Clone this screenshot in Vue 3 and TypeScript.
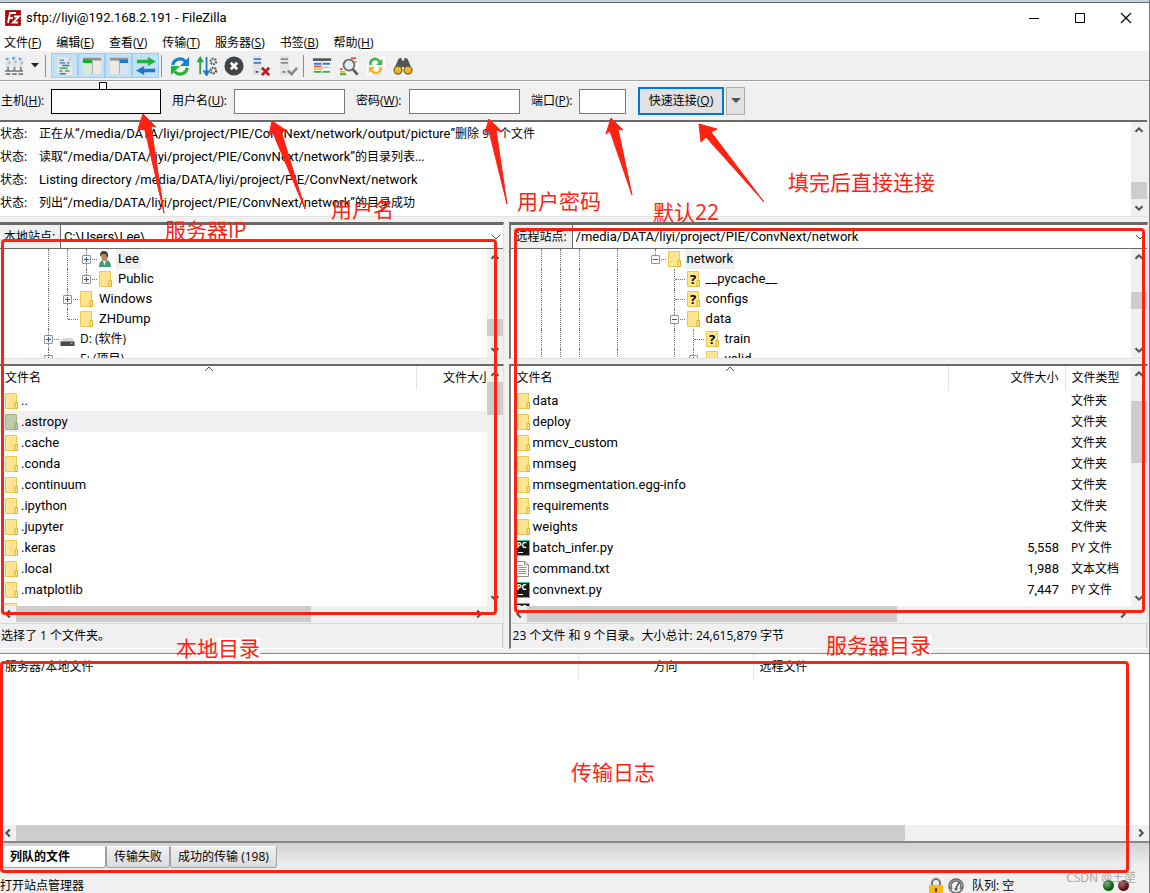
<script setup lang="ts">
interface TreeRow {
  cells: string[]
  icon: string
  label: string
  current?: boolean
  cjk?: boolean
}
interface FileRow {
  icon: string
  name: string
  size?: string
  type?: string
  selected?: boolean
}
interface Pane {
  id: string
  siteLabel: string
  path: string
  tree: TreeRow[]
  files: FileRow[]
  hasType: boolean
  treeThumb: { top: string; height: string }
  listThumb: { top: string; height: string }
  wideThumb: { width: string }
  status: string
}

const menus: [string, string][] = [
  ['文件', 'F'], ['编辑', 'E'], ['查看', 'V'], ['传输', 'T'], ['服务器', 'S'], ['书签', 'B'], ['帮助', 'H'],
]

const logs = [
  { before: '正在从', path: '“/media/DATA/liyi/project/PIE/ConvNext/network/output/picture”', after: '删除 99 个文件' },
  { before: '读取', path: '“/media/DATA/liyi/project/PIE/ConvNext/network”', after: '的目录列表...' },
  { before: '', path: 'Listing directory /media/DATA/liyi/project/PIE/ConvNext/network', after: '' },
  { before: '列出', path: '“/media/DATA/liyi/project/PIE/ConvNext/network”', after: '的目录成功' },
]

const trunk = ['v', 'v', 'v', '', 'v', '']
const folder = (name: string): FileRow => ({ icon: 'folder', name, type: '文件夹' })

const panes: Pane[] = [
  {
    id: 'local',
    siteLabel: '本地站点:',
    path: 'C:\\Users\\Lee\\',
    tree: [
      { cells: ['v', 'v', 'v plus'], icon: 'user', label: 'Lee', current: true },
      { cells: ['v', 'v', 'end plus'], icon: 'folder', label: 'Public' },
      { cells: ['v', 'v plus'], icon: 'folder', label: 'Windows' },
      { cells: ['v', 'end'], icon: 'folder', label: 'ZHDump' },
      { cells: ['v plus'], icon: 'drive', label: 'D: (软件)', cjk: true },
      { cells: ['v plus'], icon: 'drive', label: 'E: (项目)', cjk: true },
    ],
    files: [
      { icon: 'folder', name: '..' },
      { icon: 'folder-sel', name: '.astropy', selected: true },
      ...['.cache', '.conda', '.continuum', '.ipython', '.jupyter', '.keras', '.local', '.matplotlib', '.nuget']
        .map((name) => ({ icon: 'folder', name })),
    ],
    hasType: false,
    treeThumb: { top: '70%', height: '22%' },
    listThumb: { top: '0%', height: '16%' },
    wideThumb: { width: '65%' },
    status: '选择了 1 个文件夹。',
  },
  {
    id: 'remote',
    siteLabel: '远程站点:',
    path: '/media/DATA/liyi/project/PIE/ConvNext/network',
    tree: [
      { cells: [...trunk, 'end minus'], icon: 'folder', label: 'network', current: true },
      { cells: [...trunk, '', 'v tee'], icon: 'unknown', label: '__pycache__' },
      { cells: [...trunk, '', 'v tee'], icon: 'unknown', label: 'configs' },
      { cells: [...trunk, '', 'v minus'], icon: 'folder', label: 'data' },
      { cells: [...trunk, '', 'v', 'v tee'], icon: 'unknown', label: 'train' },
      { cells: [...trunk, '', 'v', 'v plus'], icon: 'folder', label: 'valid' },
    ],
    files: [
      ...['data', 'deploy', 'mmcv_custom', 'mmseg', 'mmsegmentation.egg-info', 'requirements', 'weights'].map(folder),
      { icon: 'py', name: 'batch_infer.py', size: '5,558', type: 'PY 文件' },
      { icon: 'txt', name: 'command.txt', size: '1,988', type: '文本文档' },
      { icon: 'py', name: 'convnext.py', size: '7,447', type: 'PY 文件' },
      { icon: 'py', name: '' },
    ],
    hasType: true,
    treeThumb: { top: '35%', height: '22%' },
    listThumb: { top: '9%', height: '30%' },
    wideThumb: { width: '63%' },
    status: '23 个文件 和 9 个目录。大小总计: 24,615,879 字节',
  },
]

const tools = [
  [
    { id: 'log', label: '消息日志', on: true },
    { id: 'localtree', label: '本地目录树', on: true },
    { id: 'remotetree', label: '远程目录树', on: true },
    { id: 'queue', label: '传输队列', on: true },
  ],
  [
    { id: 'refresh', label: '刷新', on: false },
    { id: 'process', label: '处理队列', on: false },
    { id: 'cancel', label: '取消', on: false },
    { id: 'disconnect', label: '断开', on: false },
    { id: 'reconnect', label: '重新连接', on: false },
  ],
  [
    { id: 'filter', label: '过滤器', on: false },
    { id: 'compare', label: '目录对比', on: false },
    { id: 'sync', label: '同步浏览', on: false },
    { id: 'find', label: '查找', on: false },
  ],
]
</script>

<template>
  <svg class="defs" aria-hidden="true">
    <symbol id="i-folder" viewBox="0 0 16 18">
      <path d="M1.500 1.500h11v15h-11z" fill="#ffe58f" stroke="#ecc84f" />
      <path d="M11 10.500h2.500v6H11z" fill="#ffe58f" stroke="#ddb02f" />
    </symbol>
    <symbol id="i-folder-sel" viewBox="0 0 16 18">
      <path d="M1.500 1.500h11v15h-11z" fill="#bccbaa" stroke="#a6b27a" />
      <path d="M11 10.500h2.500v6H11z" fill="#bccbaa" stroke="#9ba35f" />
    </symbol>
    <symbol id="i-unknown" viewBox="0 0 16 18">
      <path d="M1.500 1.500h11v15h-11z" fill="#ffe58f" stroke="#ecc84f" />
      <path d="M11 10.500h2.500v6H11z" fill="#ffe58f" stroke="#ddb02f" />
      <text x="7" y="14" text-anchor="middle" font-size="13" font-weight="700" font-family="Open Sans, sans-serif" fill="#000">?</text>
    </symbol>
    <symbol id="i-user" viewBox="0 0 16 18">
      <path d="M1 17c0-5 2-7 5-7h2c3 0 5 3 5 7z" fill="#479a76" />
      <path d="M4.500 9.500l2 6 1.500-5z" fill="#fff" />
      <path d="M3.500 4h6v4c0 4-6 4-6 0z" fill="#b98762" />
      <path d="M2 5c0-6 9-5 8 1l-1 2-1-4-4 0-1 3z" fill="#40352f" />
    </symbol>
    <symbol id="i-drive" viewBox="0 0 16 18">
      <path d="M3 8h9l2.500 4h-14z" fill="#d7d9da" />
      <path d="M0.500 11.500h14V16h-14z" fill="#45494b" />
      <path d="M10.500 13.500h2" stroke="#59e95c" stroke-width="1.500" />
    </symbol>
    <symbol id="i-py" viewBox="0 0 16 18">
      <path d="M0 1h14v16H0z" fill="#25d49b" />
      <path d="M0 2h13v14H0z" fill="#171717" />
      <text x="0.500" y="9" font-size="8" font-weight="700" font-family="Open Sans, sans-serif" fill="#fff">PC</text>
      <path d="M2 13.500h5" stroke="#fff" />
    </symbol>
    <symbol id="i-txt" viewBox="0 0 16 18">
      <path d="M.5 1.500h8l4 3v12H.5z" fill="#fff" stroke="#8d8d8d" />
      <path d="M8.500 1.500v3.500h4M2.500 5.500h4m-4 2h8m-8 2h8m-8 2h8m-8 2h8" fill="none" stroke="#929292" />
    </symbol>
    <symbol id="i-chev" viewBox="0 0 16 16">
      <path d="M4.500 9.800L8 6.300l3.500 3.500" fill="none" stroke="#505050" stroke-width="2" />
    </symbol>
  </svg>

  <main class="window">
    <div class="backdrop"></div>
    <header class="title">
      <svg class="logo" viewBox="0 0 16 16">
        <path d="M.5.5h15v15H.5z" fill="#b30808" stroke="#8e0000" stroke-dasharray="2 1" />
        <path d="M3 13L5 3h6M4 8h4M9 6.500h5l-6 6h5" fill="none" stroke="#fff" stroke-width="1.800" />
      </svg>
      <h1 class="lat">sftp://liyi@192.168.2.191 - FileZilla</h1>
      <button class="win" aria-label="最小化"><svg viewBox="0 0 12 12"><path d="M1 6.500h10" stroke="#000" /></svg></button>
      <button class="win" aria-label="最大化"><svg viewBox="0 0 12 12"><path d="M1.500 1.500h9v9h-9z" fill="none" stroke="#000" /></svg></button>
      <button class="win" aria-label="关闭"><svg viewBox="0 0 12 12"><path d="M1 1l10 10M11 1L1 11" stroke="#000" stroke-width="1.200" /></svg></button>
    </header>

    <nav class="menu">
      <button v-for="m in menus" :key="m[1]">{{ m[0] }}(<u>{{ m[1] }}</u>)</button>
    </nav>

    <div class="toolbar">
      <button class="tool" aria-label="站点管理器">
        <svg viewBox="0 0 22 22">
          <path d="M2 1h5v12H2zM9 0h5v12H9zM16 1h5v12h-5z" fill="#d9e1e6" />
          <path d="M2 3.500h3M9 2.500h3M16 3.500h3" stroke="#4f9fe0" stroke-width="2" />
          <path d="M5 7.500h2M12 6.500h2M19 7.500h2" stroke="#8a979f" stroke-width="1.500" />
          <path d="M4.500 12v4M11.500 12v4M18.500 12v4M1 16.500h20M2 20h5M9 20h5M16 20h5" stroke="#767676" stroke-width="1.800" />
        </svg>
      </button>
      <button class="more" aria-label="站点列表"><svg viewBox="0 0 8 5"><path d="M0 0h8L4 4.500z" fill="#222" /></svg></button>
      <template v-for="(group, gi) in tools" :key="gi">
        <span class="sep"></span>
        <button v-for="t in group" :key="t.id" class="tool" :class="{ on: t.on }" :aria-label="t.label">
          <svg v-if="t.id === 'log'" viewBox="0 0 22 22">
            <path d="M3 1h12l4 4v16H3z" fill="#e8e8e4" />
            <path d="M15 1v4h4z" fill="#c3c6c7" />
            <path d="M5 4.500h5m3 3h3m-11 9h3" stroke="#5d7891" stroke-width="1.500" />
            <path d="M5 7.500h6M8 10.500h8M5 19.500h7" stroke="#287bc9" stroke-width="1.500" />
            <path d="M5 13.500h9M11 16.500h5" stroke="#45a654" stroke-width="1.500" />
          </svg>
          <svg v-else-if="t.id === 'localtree'" viewBox="0 0 22 22">
            <path d="M1 3h20v17H1z" fill="#ece9e4" /><path d="M1 2h20v3H1z" fill="#929292" />
            <path d="M1 4h10v4H1z" fill="#17ad25" /><path d="M1 8h10v12H1z" fill="#d5ecd4" /><path d="M11.500 5v15" stroke="#aaa" />
          </svg>
          <svg v-else-if="t.id === 'remotetree'" viewBox="0 0 22 22">
            <path d="M1 3h20v17H1z" fill="#ece9e4" /><path d="M1 2h20v3H1z" fill="#929292" />
            <path d="M11 4h10v4H11z" fill="#1877d2" /><path d="M11 8h10v12H11z" fill="#d6e5f5" /><path d="M11.500 5v15" stroke="#aaa" />
          </svg>
          <svg v-else-if="t.id === 'queue'" viewBox="0 0 22 22">
            <path d="M1 4h12V1l9 5-9 5V8H1z" fill="#1db638" />
            <path d="M21 14H9v-3l-9 5 9 5v-3h12z" fill="#197acb" />
          </svg>
          <svg v-else-if="t.id === 'refresh'" viewBox="0 0 22 22">
            <path d="M3 10a8 8 0 0 1 14-4" fill="none" stroke="#1780ca" stroke-width="3.500" /><path d="M21 1v10H11z" fill="#1780ca" />
            <path d="M19 13a8 8 0 0 1-14 4" fill="none" stroke="#1fb53a" stroke-width="3.500" /><path d="M1 21V11h10z" fill="#1fb53a" />
          </svg>
          <svg v-else-if="t.id === 'process'" viewBox="0 0 22 22">
            <path d="M3.500 20V5M1 6l2.500-4L6 6z" fill="#20a83a" stroke="#20a83a" stroke-width="2" />
            <path d="M10.500 1v16M8 17l2.500 4 2.500-4z" fill="#1b7acb" stroke="#1b7acb" stroke-width="2" />
            <circle cx="18" cy="6" r="3" fill="none" stroke="#666" stroke-width="2.500" stroke-dasharray="2 1" />
            <circle cx="18" cy="16" r="3" fill="none" stroke="#555" stroke-width="2.500" stroke-dasharray="2 1" />
          </svg>
          <svg v-else-if="t.id === 'cancel'" viewBox="0 0 22 22">
            <circle cx="11" cy="11" r="10.500" fill="#414446" />
            <path d="M7.500 7.500l7 7m0-7l-7 7" stroke="#fff" stroke-width="3" />
          </svg>
          <svg v-else-if="t.id === 'disconnect'" viewBox="0 0 22 22">
            <path d="M2 0h10v21H2z" fill="#e1e4e6" /><path d="M3 3.500h8M3 7.500h8" stroke="#3b7fc4" stroke-width="2" />
            <path d="M5 17.500h3" stroke="#555" stroke-width="2" /><path d="M12 13l8 8m0-8l-8 8" stroke="#c91522" stroke-width="3" />
          </svg>
          <svg v-else-if="t.id === 'reconnect'" viewBox="0 0 22 22">
            <path d="M2 0h10v21H2z" fill="#e3e3e3" /><path d="M3 3.500h8M3 7.500h8" stroke="#8b8b8b" stroke-width="2" />
            <path d="M5 17.500h3" stroke="#777" stroke-width="2" /><path d="M11 16l4 4 6-7" fill="none" stroke="#8b8b8b" stroke-width="3" />
          </svg>
          <svg v-else-if="t.id === 'filter'" viewBox="0 0 22 22">
            <path d="M1 3h20v16H1z" fill="#fafafa" /><path d="M1 4h20" stroke="#555" stroke-width="3" />
            <path d="M2 8.500h8m2 0h8" stroke="#3979b8" stroke-width="2" /><path d="M2 11.500h8" stroke="#e0554d" stroke-width="2" />
            <path d="M2 14.500h8" stroke="#e9c232" stroke-width="2" /><path d="M2 17.500h8m2 0h8" stroke="#36aa45" stroke-width="2" />
            <path d="M11 5v14M12 12.500h8" stroke="#aaa" />
          </svg>
          <svg v-else-if="t.id === 'compare'" viewBox="0 0 22 22">
            <path d="M9 1h12v13H9zM0 9h12v12H0z" fill="#fff" />
            <path d="M13 2.500h6" stroke="#e04a30" stroke-width="2" /><path d="M17 6.500h3M1 17.500h6" stroke="#e7b62b" stroke-width="2" />
            <path d="M1 14.500h3" stroke="#d44" stroke-width="2" /><path d="M1 20h7" stroke="#30a648" stroke-width="2" />
            <circle cx="11" cy="10" r="6" fill="#e6edf0" stroke="#6b6b6b" stroke-width="2" /><path d="M15.500 15l5 5.500" stroke="#5a5a5a" stroke-width="3" />
          </svg>
          <svg v-else-if="t.id === 'sync'" viewBox="0 0 22 22">
            <path d="M9 0h12v13H9zM1 8h12v13H1z" fill="#fff" />
            <path d="M5 10a5 5 0 0 1 10-3" fill="none" stroke="#43b84b" stroke-width="3" /><path d="M18 3v7h-7z" fill="#43b84b" />
            <path d="M16 12a5 5 0 0 1-10 3" fill="none" stroke="#f0b528" stroke-width="3" /><path d="M3 19v-7h7z" fill="#f0b528" />
          </svg>
          <svg v-else viewBox="0 0 22 22">
            <path d="M6 3l3-1 1 3h2l1-3 3 1 5 12-7 3-2-6h-2l-2 6-7-3z" fill="#515557" />
            <circle cx="5.500" cy="15.500" r="5" fill="#5d5544" /><circle cx="16.500" cy="15.500" r="5" fill="#5d5544" />
            <circle cx="5.500" cy="15.500" r="3.800" fill="#f7b51d" /><circle cx="16.500" cy="15.500" r="3.800" fill="#f7b51d" />
          </svg>
        </button>
      </template>
    </div>

    <form class="connect" @submit.prevent>
      <label class="first" for="host">主机(<u>H</u>):</label><input id="host" class="focus" type="text" />
      <label class="l-user" for="user">用户名(<u>U</u>):</label><input id="user" type="text" />
      <label class="l-pass" for="pass">密码(<u>W</u>):</label><input id="pass" type="password" />
      <label class="l-port" for="port">端口(<u>P</u>):</label><input id="port" class="port" type="text" />
      <button class="go" type="submit">快速连接(<u>Q</u>)</button>
      <button class="history" type="button" aria-label="历史"><svg viewBox="0 0 10 6"><path d="M0 0h10L5 5z" fill="#555" /></svg></button>
    </form>

    <section class="log">
      <div class="lines">
        <p v-for="(l, i) in logs" :key="i"><span class="tag">状态:</span>{{ l.before }}<span class="lat">{{ l.path }}</span>{{ l.after }}</p>
      </div>
      <div class="vbar">
        <svg class="arrow"><use href="#i-chev" /></svg>
        <div class="track"><div class="thumb" :style="{ top: '71%', height: '27%' }"></div></div>
        <svg class="arrow down"><use href="#i-chev" /></svg>
      </div>
    </section>

    <div class="panes">
      <section v-for="p in panes" :key="p.id" class="pane" :class="p.id">
        <div class="upper">
          <div class="site">
            <label :for="p.id + '-path'">{{ p.siteLabel }}</label>
            <select :id="p.id + '-path'" class="lat"><option>{{ p.path }}</option></select>
            <svg class="caret" viewBox="0 0 10 10"><path d="M1 3l4 4 4-4" fill="none" stroke="#444" /></svg>
          </div>
          <div class="scroller tree-area">
            <ul class="tree">
              <li v-for="(r, i) in p.tree" :key="i">
                <span v-for="(c, ci) in r.cells" :key="ci" class="cell" :class="[c, { knot: ci === r.cells.length - 1 }]">
                  <i v-if="c.includes('plus') || c.includes('minus')" class="box"></i>
                </span>
                <svg class="ticon"><use :href="'#i-' + r.icon" /></svg>
                <span class="label" :class="{ current: r.current, lat: !r.cjk }">{{ r.label }}</span>
              </li>
            </ul>
            <div class="vbar">
              <svg class="arrow"><use href="#i-chev" /></svg>
              <div class="track"><div class="thumb" :style="p.treeThumb"></div></div>
              <svg class="arrow down"><use href="#i-chev" /></svg>
            </div>
          </div>
        </div>

        <div class="lower">
          <div class="scroller list-area">
            <div class="clip">
              <svg class="sort" viewBox="0 0 10 6"><path d="M1 5l4-4 4 4" fill="none" stroke="#555" /></svg>
              <table>
                <thead>
                  <tr><th class="name">文件名</th><th class="size">文件大小</th><th v-if="p.hasType" class="type">文件类型</th></tr>
                </thead>
                <tbody>
                  <tr v-for="f in p.files" :key="f.name" :class="{ selected: f.selected }">
                    <td class="name lat"><span class="file"><svg class="ficon"><use :href="'#i-' + f.icon" /></svg>{{ f.name }}</span></td>
                    <td class="size lat">{{ f.size }}</td>
                    <td v-if="p.hasType" class="type">{{ f.type }}</td>
                  </tr>
                </tbody>
              </table>
            </div>
            <div class="vbar">
              <svg class="arrow"><use href="#i-chev" /></svg>
              <div class="track"><div class="thumb" :style="p.listThumb"></div></div>
              <svg class="arrow down"><use href="#i-chev" /></svg>
            </div>
          </div>
          <div class="hbar inset">
            <svg class="arrow left"><use href="#i-chev" /></svg>
            <div class="track"><div class="thumb" :style="p.wideThumb"></div></div>
            <svg class="arrow right"><use href="#i-chev" /></svg>
          </div>
          <div class="pstatus">{{ p.status }}</div>
        </div>
      </section>
    </div>

    <section class="queue">
      <table>
        <thead><tr><th class="q1">服务器/本地文件</th><th class="q2">方向</th><th class="q3">远程文件</th></tr></thead>
      </table>
      <div class="fill"></div>
      <div class="hbar">
        <svg class="arrow left"><use href="#i-chev" /></svg>
        <div class="track"><div class="thumb" :style="{ width: '79.6%' }"></div></div>
        <svg class="arrow right"><use href="#i-chev" /></svg>
      </div>
    </section>

    <div class="tabs">
      <button class="active">列队的文件</button><button>传输失败</button><button>成功的传输 (198)</button>
    </div>

    <footer class="status">
      <span class="hint">打开站点管理器</span>
      <svg class="sicon" viewBox="0 0 16 16">
        <path d="M4 8V5a4 4 0 0 1 8 0v3" fill="none" stroke="#777" stroke-width="2" /><path d="M1 7h14v9H1z" fill="#f9b80f" /><path d="M8 10v4" stroke="#5a4300" stroke-width="2" />
      </svg>
      <svg class="sicon" viewBox="0 0 16 16">
        <circle cx="8" cy="8" r="7" fill="#eee" stroke="#666" stroke-width="1.500" /><path d="M4 11a5 5 0 1 1 8 0M8 10l3-5" fill="none" stroke="#555" stroke-width="1.500" /><circle cx="8" cy="11" r="1.500" fill="#555" />
      </svg>
      <span class="qsize">队列: 空</span>
      <span class="led green"></span><span class="led red"></span>
      <span class="credit">CSDN @王堃</span>
    </footer>

    <div class="notes">
      <svg class="arrows" viewBox="0 0 1150 893">
        <path d="M143 114L156 127 151 126 164 213 145 130 138 129zM272 121L287 131 281 131 305 209 273 133 269 135zM489 119L501 131 496 130 507 204 489 131 485 133zM611 118L623 130 618 129 632 195 610 131 606 134zM699 124L717 129 711 132 764 202 706 137 701 142z" fill="#ff2112" stroke="#ff2112" />
        <path d="M99.500 82.500h7v7h-7z" fill="#fff" stroke="#000" />
      </svg>
      <div class="frame f-local"></div>
      <div class="frame f-remote"></div>
      <div class="frame f-queue"></div>
      <span class="note n-ip">服务器IP</span>
      <span class="note n-user">用户名</span>
      <span class="note n-pass">用户密码</span>
      <span class="note n-port">默认22</span>
      <span class="note n-go">填完后直接连接</span>
      <span class="note n-local">本地<mark>目录</mark></span>
      <span class="note n-remote">服务器<mark>目录</mark></span>
      <span class="note n-log">传输日志</span>
    </div>
  </main>
</template>

<style>
body { margin: 0; background: #f0f0f0; }
</style>

<style scoped>
* { box-sizing: border-box; }
.defs { position: absolute; width: 0; height: 0; }
.window {
  position: relative; display: flex; flex-direction: column; min-height: 100vh; overflow: hidden;
  background: #f0f0f0; color: #000; border-right: 1px solid #77787b;
  font: 12px/18px "Open Sans", "Noto Sans CJK SC", sans-serif;
}
button { font: inherit; color: inherit; border: 0; background: none; padding: 0; }
svg { display: block; flex: none; }
.lat { font-family: Roboto, "Noto Sans CJK SC", sans-serif; font-size: 13px; }
.backdrop { height: 3px; background: #c5cfe2; border-bottom: 1px solid #686b70; }

.title { display: flex; align-items: center; height: 30px; padding-left: 5px; background: #fff; }
.logo { width: 16px; height: 16px; }
.title h1 { flex: 1; margin: 0 0 0 5px; font-weight: 400; }
.win { width: 46px; height: 28px; display: grid; place-items: center; }
.win svg { width: 12px; height: 12px; }
.menu { display: flex; gap: 15px; height: 18px; padding-left: 4px; background: #fff; }
.menu button { height: 18px; line-height: 20px; }

.toolbar { display: flex; align-items: center; height: 30px; border-bottom: 1px solid #a0a0a0; }
.tool { width: 27px; height: 25px; display: grid; place-items: center; }
.tool svg { width: 20px; height: 20px; }
.tool.on { background: #c4e0f5; border: 1px solid #99cff5; }
.more { width: 16px; display: grid; place-items: center; }
.more svg { width: 8px; height: 5px; }
.sep { width: 1px; height: 22px; margin: 0 4px 0 2px; background: #8d8d8d; }
.more + .sep { margin-right: 5px; }

.connect { display: flex; align-items: center; height: 39px; border-top: 1px solid #fff; }
.connect input { width: 111px; height: 25px; border: 1px solid #7a7a7a; background: #fff; padding: 0 4px; font: inherit; outline: 0; }
.connect input.focus { width: 110px; border-color: #000; }
.connect input.port { width: 47px; }
.connect label { flex: none; padding-left: 11px; }
.connect label.first { width: 51px; padding-left: 1px; }
.l-user { width: 73px; }
.l-pass { width: 64px; }
.l-port { width: 59px; }
.go { width: 86px; height: 28px; margin-left: 12px; background: #e1e1e1; border: 2px solid #0078d7; }
.history { width: 19px; height: 28px; margin-left: 2px; background: #e1e1e1; border: 1px solid #adadad; display: grid; place-items: center; }
.history svg { width: 10px; height: 6px; }

.log { display: flex; height: 97px; margin-right: 2px; border-top: 2px solid #696969; border-bottom: 1px solid #e3e3e3; background: #fff; }
.lines { flex: 1; min-width: 0; overflow: hidden; }
.lines p { margin: 0; height: 23px; line-height: 23px; white-space: nowrap; }
.tag { display: inline-block; width: 39px; }

.vbar { width: 16px; flex: none; display: flex; flex-direction: column; background: #f0f0f0; }
.hbar { height: 16px; flex: none; display: flex; background: #f0f0f0; }
.arrow { width: 16px; height: 16px; }
.arrow.down { transform: rotate(180deg); }
.arrow.left { transform: rotate(-90deg); }
.arrow.right { transform: rotate(90deg); }
.track { position: relative; flex: 1; }
.thumb { position: absolute; left: 0; background: #cdcdcd; }
.vbar .thumb { width: 100%; }
.hbar .thumb { height: 100%; top: 0; }
.hbar.inset { margin-right: 16px; }

.panes { display: flex; gap: 5px; margin: 5px 1px 0 0; }
.pane { min-width: 0; flex: 640 1 0; }
.pane.local { flex: 504 1 0; }
.upper, .lower { border-right: 1px solid #e3e3e3; border-left: 2px solid #787878; }
.local .upper, .local .lower { border-left: 0; }
.upper { border-top: 3px solid #696969; border-bottom: 1px solid #e3e3e3; }
.site { position: relative; display: flex; height: 24px; border-bottom: 1px solid #696969; }
.site label { flex: none; width: 61px; padding-left: 4px; line-height: 23px; border-right: 1px solid #696969; }
.remote .site label { width: 62px; padding-left: 5px; }
.site select { flex: 1; min-width: 0; appearance: none; border: 0; background: #fff; padding: 0 20px 1px 3px; color: #000; outline: 0; }
.caret { position: absolute; right: 2px; top: 7px; width: 10px; height: 10px; }
.scroller { display: flex; background: #fff; overflow: hidden; }
.tree-area { height: 109px; }
.tree { list-style: none; flex: 1; min-width: 0; margin: 0; padding: 0 0 0 39px; overflow: hidden; }
.remote .tree { padding-left: 21px; }
.tree li { display: flex; height: 20px; }
.cell { position: relative; width: 19px; flex: none; }
.cell.v::before, .cell.end::before { content: ""; position: absolute; left: 9px; top: 0; height: 20px; border-left: 1px dotted #707070; }
.cell.end::before { height: 10px; }
.cell.knot::after { content: ""; position: absolute; left: 10px; top: 10px; width: 10px; border-top: 1px dotted #707070; }
.box {
  position: absolute; z-index: 1; left: 5px; top: 6px; width: 9px; height: 9px; border: 1px solid #919191; border-radius: 1px;
  background: linear-gradient(#3b56a0, #3b56a0) 1px 3px / 5px 1px no-repeat, #f8f8f8;
}
.plus .box { background: linear-gradient(#3b56a0, #3b56a0) 1px 3px / 5px 1px no-repeat, linear-gradient(#3b56a0, #3b56a0) 3px 1px / 1px 5px no-repeat, #f8f8f8; }
.ticon { width: 16px; height: 18px; margin: 1px 2px 0; }
.label { padding: 0 2px; line-height: 20px; white-space: nowrap; }
.label.current { background: #f0f0f0; }

.lower { margin-top: 5px; border-top: 2px solid #696969; border-bottom: 1px solid #fff; }
.list-area { height: 240px; }
.clip { position: relative; flex: 1; min-width: 0; overflow: hidden; }
.sort { position: absolute; top: 0; left: 204px; width: 10px; height: 6px; }
.remote .sort { left: 214px; }
table { border-collapse: collapse; table-layout: fixed; width: 100%; }
th, td { padding: 0; font-weight: 400; text-align: left; white-space: nowrap; overflow: hidden; height: 21px; }
th { height: 24px; border-right: 1px solid #e5e5e5; }
th:last-child { border-right: 0; }
.name { padding-left: 5px; }
.remote .name { padding-left: 6px; }
.file { display: flex; align-items: center; height: 21px; }
.ficon { width: 16px; height: 18px; margin-left: -1px; margin-right: 1px; }
.size { width: 70px; text-align: right; }
.local .size { text-align: left; padding-left: 26px; }
.remote .size { width: 117px; padding-right: 6px; }
.type { width: 66px; padding-left: 6px; }
.selected { background: #f0f0f0; }
.pstatus { height: 25px; line-height: 24px; margin-top: 1px; padding-left: 1px; border-top: 1px solid #d8d8d8; border-right: 1px solid #d0d0d0; white-space: nowrap; }
.remote .pstatus { padding-left: 2px; }

.queue { flex: 1; display: flex; flex-direction: column; margin-top: 4px; background: #fff; border-top: 1px solid #828790; border-bottom: 2px solid #828790; }
.queue .fill { flex: 1; }
.queue th { height: 26px; padding-left: 6px; }
.queue th.q1 { width: 578px; padding-left: 5px; }
.queue th.q2 { width: 175px; padding: 0; text-align: center; }

.tabs { display: flex; height: 27px; padding: 3px 2px 2px; background: linear-gradient(#d2d2d2, #ededed 80%); }
.tabs button { padding: 0 7px; height: 22px; line-height: 18px; border: 1px solid #a0a0a0; border-top-color: #fff; border-radius: 0 0 3px 3px; background: linear-gradient(#f0f0f0, #dcdcdc); }
.tabs .active { width: 104px; text-align: left; font-weight: 700; background: #fff; }

.status { display: flex; align-items: center; height: 23px; padding: 8px 20px 0 0; position: relative; }
.hint { flex: 1; }
.sicon { width: 16px; height: 16px; margin-right: 4px; }
.qsize { width: 131px; padding-left: 4px; }
.led { width: 11px; height: 11px; border-radius: 50%; margin-left: 4px; }
.led.green { background: radial-gradient(circle at 35% 35%, #6fae6f, #0a610f 60%); }
.led.red { background: radial-gradient(circle at 35% 35%, #a96a6a, #640d10 60%); }
.credit { position: absolute; right: 13px; top: -1px; color: #9b9b9b; opacity: .85; }

.notes { position: absolute; inset: 0; pointer-events: none; }
.arrows { position: absolute; left: 0; top: 0; width: 1150px; height: 893px; }
.frame { position: absolute; border: 3px solid #ff2112; border-radius: 4px; }
.f-local { left: 1px; top: 239px; width: 496px; height: 376px; }
.f-remote { left: 514px; top: 228px; width: 631px; height: 385px; }
.f-queue { left: 0; top: 661px; width: 1129px; height: 212px; }
.note { position: absolute; color: #ff2112; font: 21px/24px "Open Sans", "Noto Sans CJK SC", sans-serif; white-space: nowrap; }
.note mark { display: inline-block; line-height: 20px; background: #fff; color: inherit; }
.n-ip { left: 165px; top: 218px; }
.n-user { left: 331px; top: 197px; }
.n-pass { left: 517px; top: 189px; }
.n-port { left: 653px; top: 200px; }
.n-go { left: 788px; top: 170px; }
.n-local { left: 176px; top: 636px; }
.n-remote { left: 826px; top: 633px; }
.n-log { left: 571px; top: 760px; }
</style>
